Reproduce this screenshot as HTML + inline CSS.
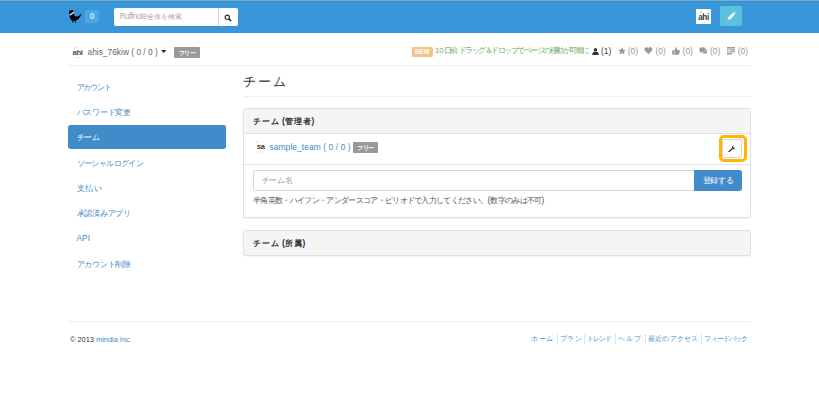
<!DOCTYPE html>
<html><head><meta charset="utf-8">
<style>
*{box-sizing:border-box;margin:0;padding:0}
html,body{width:819px;height:401px;overflow:hidden;background:#fff}
body{font-family:"Liberation Sans",sans-serif;font-size:8.4px;color:#333;position:relative;line-height:12px}
.abs{position:absolute;white-space:nowrap}
.j{font-size:1.25em;letter-spacing:-0.1px}
#topline{left:0;top:0;width:819px;height:1px;background:#8ca6bc}
#hdr{left:0;top:1px;width:819px;height:32px;background:#3896d9;border-top:1px solid #2494dd}
#badge{left:85px;top:9.7px;width:14.2px;height:13.5px;background:#4aa7df;border-radius:2px;color:#cfe6f8;font-weight:bold;text-align:center;line-height:13.5px}
#search{left:113.5px;top:8.2px;width:124.5px;height:18px;background:#fff;border-radius:2px}
#search .ph{position:absolute;left:6.3px;top:0;line-height:18px;color:#aaa;white-space:nowrap;font-size:8.2px;letter-spacing:-0.45px}
#search .j{font-size:9px;letter-spacing:0.2px}
#search .dv{position:absolute;left:104.7px;top:0;width:1px;height:18px;background:#d5d5d5}
#av1{left:696px;top:9.3px;width:15px;height:14.7px;background:#fff;color:#3a3a3a;font-size:8.2px;font-weight:bold;text-align:center;line-height:14.7px;letter-spacing:-0.4px}
#editbtn{left:719.5px;top:5.5px;width:22.8px;height:20.1px;background:#5bc0de;border-radius:2px}
.line{height:1px;background:#efefef}
.label{font-weight:bold;color:#fff;border-radius:1.2px;text-align:center}
.label .j{font-size:7.5px;letter-spacing:0;-webkit-text-stroke:0.3px #fff}
.nav{left:68px;width:157.5px;height:24px;line-height:24px;padding-left:8.5px;color:#428bca}
.nav.active{background:#428bca;color:#fff;border-radius:2.4px}
.cnt{top:45px;line-height:12px;color:#949aa0}
.fl{top:333px;color:#428bca;font-size:9px;line-height:12px}
.fsep{top:334px;width:1px;height:10.5px;background:#e2e2e2}
.panel{border:1px solid #e0e0e0;border-radius:2.4px;background:#fff;box-shadow:0 1px 1px rgba(0,0,0,.04)}
.ph2{background:#f5f5f5;padding-left:9px;line-height:24px;font-weight:bold}
.ph2 .j{letter-spacing:1px;-webkit-text-stroke:0.35px #333}
</style></head><body>
<div id="topline" class="abs"></div>
<div id="hdr" class="abs"></div>
<svg class="abs" style="left:66px;top:8px" width="20" height="18" viewBox="66 8 20 18">
  <circle cx="71.6" cy="12.6" r="2.6" fill="#000"/>
  <path d="M69.3 13.4C69.4 16.2 69.8 18.6 71.2 20 72.6 21.3 75.2 21.3 77.2 20 79 18.8 80.2 16.8 80.9 15.3L81.9 14.3 80.6 14.2C79.6 15.3 78.4 16.4 76.8 16.6 75.3 16.7 74.3 15.8 73.9 13.4z" fill="#000"/>
  <path d="M69.6 15.2L74.2 12.1" stroke="#f4f4f4" stroke-width="1.3"/>
  <path d="M72.9 20.5L72.7 22.8M75.3 20.5L75.5 22.8" stroke="#111" stroke-width="1"/>
</svg>
<div id="badge" class="abs">0</div>
<div id="search" class="abs"><span class="ph">Ruffnote<span class="j">全体を検索</span></span><span class="dv"></span>
  <svg style="position:absolute;left:110.5px;top:5.5px" width="8" height="8" viewBox="0 0 8 8"><circle cx="3.3" cy="3.3" r="2.2" fill="none" stroke="#333" stroke-width="1.2"/><path d="M4.9 4.9l2.2 2.2" stroke="#333" stroke-width="1.5"/></svg>
</div>
<div id="av1" class="abs"><svg style="position:absolute;left:2px;top:1px" width="11" height="13" viewBox="0 0 11 13"><path d="M2 3.5c0-1.5 1-2.3 2.2-2.3" stroke="#d9c8e6" stroke-width="1.2" fill="none"/><path d="M3 12.5h1.5M6 12.5h1.5" stroke="#e3d3ee" stroke-width="1"/></svg><span style="position:relative;top:1.5px">ahi</span></div>
<div id="editbtn" class="abs">
  <svg style="position:absolute;left:7px;top:6px" width="9" height="8" viewBox="0 0 9 8"><path d="M1.6 5.2L5.6 1.2 7.3 2.9 3.3 6.9 .8 7.6z" fill="#fff" stroke="#fff" stroke-width=".5" stroke-linejoin="round"/><path d="M6.2 .6l.4-.4c.3-.3.7-.3 1 0l.7.7c.3.3.3.7 0 1l-.4.4z" fill="#fff"/></svg>
</div>

<!-- user bar -->
<div class="abs" style="left:71.6px;top:46.4px;width:12px;height:11.6px;font-size:7.8px;font-weight:bold;line-height:11.6px;color:#505050;letter-spacing:-0.4px;text-align:center"><svg style="position:absolute;left:1px;top:0" width="10" height="12" viewBox="0 0 10 12"><path d="M1.5 3c0-1.3.9-2 2-2" stroke="#dccbe8" stroke-width="1.1" fill="none"/><path d="M3 11.5h1.3M5.5 11.5h1.3" stroke="#e3d3ee" stroke-width="1"/></svg><span style="position:relative;top:0.4px">ahi</span></div>
<div class="abs" style="left:87.5px;top:45.8px;color:#666">ahis_76kiw ( 0 / 0 ) <svg width="5.4" height="3.4" viewBox="0 0 6 4" style="vertical-align:1.3px;margin-left:0.5px"><path d="M0 0h6L3 3.8z" fill="#333"/></svg></div>
<div class="abs label" style="left:174.3px;top:46.8px;width:25.7px;height:11px;line-height:11px;background:#999"><span class="j">フリー</span></div>

<div class="abs label" style="left:411.8px;top:46.7px;width:21.2px;height:10px;line-height:10px;background:#f2c48a;font-size:6.3px">NEW</div>
<div class="abs" style="left:435px;top:45.3px;color:#6bab6b;font-size:7.8px">10<span class="j" style="font-size:9.8px;letter-spacing:-0.85px">日前</span> <span class="j" style="font-size:9.8px;letter-spacing:-0.85px">ドラッグ＆ドロップでページの移動が可能に</span></div>

<!-- counts -->
<svg class="abs" style="left:591.8px;top:47.5px" width="7" height="7" viewBox="0 0 7 7"><circle cx="3.5" cy="1.8" r="1.7" fill="#333"/><path d="M0.2 7c0-2 1-3.4 3.3-3.4S6.8 5 6.8 7z" fill="#333"/></svg>
<div class="abs cnt" style="left:601px;color:#3a3a3a">(1)</div>
<svg class="abs" style="left:617.5px;top:46.8px" width="8.2" height="8.2" viewBox="0 0 10 10"><path d="M5 0.3l1.4 3.1 3.4.3-2.6 2.2.8 3.3L5 7.4 2 9.2l.8-3.3L.2 3.7l3.4-.3z" fill="#999"/></svg>
<div class="abs cnt" style="left:627.7px">(0)</div>
<svg class="abs" style="left:644.3px;top:47.2px" width="8.8" height="7.4" viewBox="0 0 10 9"><path d="M5 8.8L1 4.8C-.3 3.5-.2 1.3 1.3.5 2.6-.2 4 .3 5 1.5 6-.3 7.4-.2 8.7.5c1.5.8 1.600 3 .3 4.300z" fill="#999"/></svg>
<div class="abs cnt" style="left:655.5px">(0)</div>
<svg class="abs" style="left:671.5px;top:47.2px" width="8.2" height="7.8" viewBox="0 0 10 10"><path d="M0 4.3h2.2V10H0z" fill="#999"/><path d="M2.8 4.3l2-3.5c.3-.6 1.5-.5 1.5.5L6 3.8h3c.8 0 1.1.7.9 1.3L8.7 9.2c-.2.5-.6.8-1.1.8H2.8z" fill="#999"/></svg>
<div class="abs cnt" style="left:682.6px">(0)</div>
<svg class="abs" style="left:698.9px;top:47.3px" width="8.5" height="7.5" viewBox="0 0 11 10"><ellipse cx="4.5" cy="3.6" rx="4.3" ry="3.2" fill="#999"/><path d="M1.5 5.8L.8 8.3 3.5 6.5z" fill="#999"/><path d="M9.6 3.4c1 .7 1.4 1.600 1.2 2.600-.1.8-.6 1.500-1.4 2l.6 1.8-2.300-1.200c-1.600.3-3.300-.1-4.300-1.100 2.800.2 5.800-1.300 6.200-4.100z" fill="#999"/></svg>
<div class="abs cnt" style="left:710px">(0)</div>
<svg class="abs" style="left:726.5px;top:47.3px" width="8.1" height="7.5" viewBox="0 0 10 9"><path d="M0 0h10v1.6H0zM0 2.5h2v1.6H0zM3 2.5h7v1.6H3zM0 5h2v1.6H0zM3 5h7v1.6H3zM0 7.4h6v1.6H0z" fill="#999"/></svg>
<div class="abs cnt" style="left:737.8px">(0)</div>

<div class="abs line" style="left:67.5px;top:65px;width:683.5px"></div>

<!-- sidebar -->
<div class="abs nav" style="top:75px"><span class="j" style="letter-spacing:-0.9px">アカウント</span></div>
<div class="abs nav" style="top:100.2px"><span class="j">パスワード変更</span></div>
<div class="abs nav active" style="top:125.2px"><span class="j">チーム</span></div>
<div class="abs nav" style="top:150.7px"><span class="j" style="letter-spacing:-0.45px">ソーシャルログイン</span></div>
<div class="abs nav" style="top:175.9px"><span class="j" style="letter-spacing:1px">支払い</span></div>
<div class="abs nav" style="top:201.1px"><span class="j">承認済みアプリ</span></div>
<div class="abs nav" style="top:226.3px">API</div>
<div class="abs nav" style="top:251.5px"><span class="j">アカウント削除</span></div>

<!-- main -->
<div class="abs" style="left:243px;top:72px;font-size:14.4px;line-height:18px;color:#333"><span class="j" style="font-size:16.5px;letter-spacing:2.5px;-webkit-text-stroke:0.4px #333">チーム</span></div>
<div class="abs line" style="left:243px;top:96px;width:508px"></div>

<div class="abs panel" style="left:243px;top:108px;width:508px;height:110px">
  <div class="ph2" style="height:25px;border-bottom:1px solid #e0e0e0;border-radius:2px 2px 0 0"><span class="j">チーム</span> (<span class="j">管理者</span>)</div>
</div>
<div class="abs line" style="left:244px;top:164px;width:506px;background:#e3e3e3"></div>
<!-- team row -->
<div class="abs" style="left:255px;top:140.2px;width:11.5px;height:13.4px;font-size:7.6px;font-weight:bold;line-height:13.4px;color:#3a3a3a;text-align:center;letter-spacing:-0.3px"><svg style="position:absolute;left:0;top:0" width="11.5" height="13.4" viewBox="0 0 11.5 13.4"><path d="M1.6 3.4c.2-1.3 1-2 2.2-2.1" stroke="#cfe8cf" stroke-width="1.2" fill="none"/><path d="M9.5 5.5l1.2-1" stroke="#d5ecd5" stroke-width="1"/><path d="M3 12.3h1.6M6.2 12.3h1.6" stroke="#d8eed8" stroke-width="1"/></svg><span style="position:relative">sa</span></div>
<div class="abs" style="left:269.5px;top:141px;color:#428bca;letter-spacing:0.1px">sample_team ( 0 / 0 )</div>
<div class="abs label" style="left:352.7px;top:142px;width:25.5px;height:10.8px;line-height:10.8px;background:#999"><span class="j">フリー</span></div>
<div class="abs" style="left:721.6px;top:139.4px;width:20.4px;height:18.8px;border:1px solid #d6d6d6;border-radius:2px;background:#fff"></div>
<svg class="abs" style="left:727.6px;top:144.6px" width="7.8" height="7.8" viewBox="0 0 10 10"><path d="M1 9l4.2-4.2" stroke="#333" stroke-width="1.6" stroke-linecap="round"/><path d="M5 3.2c0-1.6 1.3-2.8 2.9-2.6L6.6 2l.5 1.4 1.4.4 1.3-1.3c.2 1.6-1 2.9-2.6 2.9-.3 0-.6 0-.9-.1z" fill="#333"/></svg>
<div class="abs" style="left:719.2px;top:135.1px;width:27.8px;height:27px;border:3.1px solid #ffb600;border-radius:5px"></div>
<!-- form -->
<div class="abs" style="left:253px;top:170.3px;width:442px;height:20.3px;border:1px solid #d5d5d5;border-radius:2.4px 0 0 2.4px;background:#fff;padding-left:7.5px;line-height:18px;color:#999"><span class="j">チーム名</span></div>
<div class="abs" style="left:694.4px;top:170.3px;width:47.4px;height:20.3px;background:#428bca;border-radius:0 2.4px 2.4px 0;color:#fff;text-align:center;line-height:20.3px"><span class="j">登録する</span></div>
<div class="abs" style="left:253px;top:194px;color:#555"><span class="j" style="letter-spacing:-0.55px">半角英数・ハイフン・アンダースコア・ピリオドで入力してください。</span>(<span class="j" style="letter-spacing:-0.55px">数字のみは不可</span>)</div>

<div class="abs panel ph2" style="left:243px;top:230.3px;width:508px;height:25.7px"><span class="j">チーム</span> (<span class="j">所属</span>)</div>

<!-- footer -->
<div class="abs line" style="left:67.5px;top:320.5px;width:683.5px"></div>
<div class="abs" style="left:70px;top:333.8px;color:#333;font-size:7.4px">© 2013 <span style="color:#428bca">mindia Inc.</span></div>
<div class="abs fl j" style="left:530.8px;letter-spacing:1.07px">ホーム</div>
<div class="abs fl j" style="left:560.1px;letter-spacing:0.63px">プラン</div>
<div class="abs fl j" style="left:587.1px;letter-spacing:-0.73px">トレンド</div>
<div class="abs fl j" style="left:618.1px;letter-spacing:1.28px">ヘルプ</div>
<div class="abs fl j" style="left:648.1px;letter-spacing:0.39px">最近のアクセス</div>
<div class="abs fl j" style="left:704.4px;letter-spacing:-0.58px">フィードバック</div>
<div class="abs fsep" style="left:556.7px"></div>
<div class="abs fsep" style="left:584.0px"></div>
<div class="abs fsep" style="left:614.8px"></div>
<div class="abs fsep" style="left:644.7px"></div>
<div class="abs fsep" style="left:701.3px"></div>
<script>
(function(){
  try{
    var c=document.createElement('canvas').getContext('2d');
    c.font='100px "Liberation Sans",sans-serif';
    if(c.measureText('\u30c1\u30fc\u30e0').width>262){
      var els=document.querySelectorAll('.j');
      for(var i=0;i<els.length;i++){
        var e=els[i],cs=getComputedStyle(e),fs=parseFloat(cs.fontSize),ls=parseFloat(cs.letterSpacing)||0,n=e.textContent.length;
        var target=n*(0.75*fs+ls);
        e.style.fontSize=(fs*0.8)+'px';
        e.style.letterSpacing='0px';
        e.style.webkitTextStroke='0';
        var w=e.getBoundingClientRect().width;
        e.style.letterSpacing=((target-w)/n)+'px';
      }
    }
  }catch(err){}
})();
</script>
</body></html>
